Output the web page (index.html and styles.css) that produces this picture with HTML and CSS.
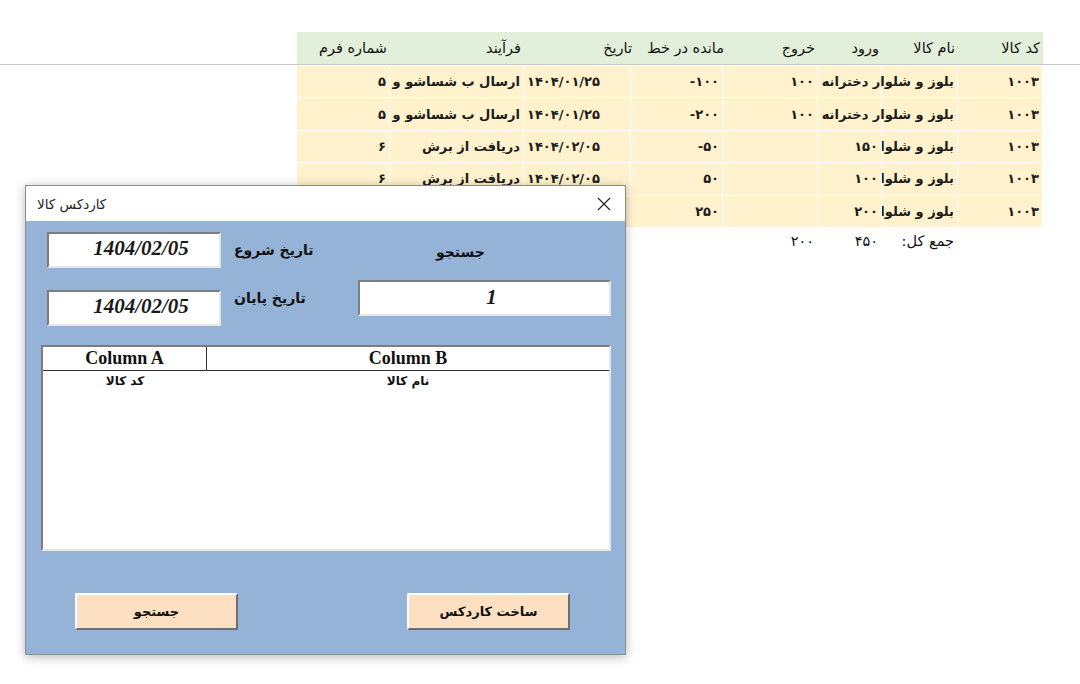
FILE: index.html
```html
<!DOCTYPE html>
<html lang="fa">
<head>
  <meta charset="UTF-8">
  <title>کاردکس کالا</title>
  <link rel="stylesheet" href="styles.css">
</head>

<body>
  <div class="sheet">
    <div class="frozen-pane">
      <table class="grid">
        <colgroup>
          <col class="c-code"><col class="c-name"><col class="c-in"><col class="c-out">
          <col class="c-bal"><col class="c-date"><col class="c-proc"><col class="c-form">
        </colgroup>
        <tr class="head-row">
          <th>کد کالا</th>
          <th>نام کالا</th>
          <th>ورود</th>
          <th>خروج</th>
          <th class="nudge">مانده در خط</th>
          <th class="nudge">تاریخ</th>
          <th>فرآیند</th>
          <th>شماره فرم</th>
        </tr>
      </table>
    </div>
    <table class="grid data">
      <colgroup>
        <col class="c-code"><col class="c-name"><col class="c-in"><col class="c-out">
        <col class="c-bal"><col class="c-date"><col class="c-proc"><col class="c-form">
      </colgroup>
      <tr>
        <td>۱۰۰۳</td><td class="spill">بلوز و شلوار دخترانه</td><td></td><td>۱۰۰</td>
        <td class="num">-۱۰۰</td><td class="date">۱۴۰۴/۰۱/۲۵</td><td>ارسال ب شساشو و</td><td>۵</td>
      </tr>
      <tr>
        <td>۱۰۰۳</td><td class="spill">بلوز و شلوار دخترانه</td><td></td><td>۱۰۰</td>
        <td class="num">-۲۰۰</td><td class="date">۱۴۰۴/۰۱/۲۵</td><td>ارسال ب شساشو و</td><td>۵</td>
      </tr>
      <tr>
        <td>۱۰۰۳</td><td>بلوز و شلوار دخترانه</td><td>۱۵۰</td><td></td>
        <td class="num">-۵۰</td><td class="date">۱۴۰۴/۰۲/۰۵</td><td>دریافت از برش</td><td>۶</td>
      </tr>
      <tr>
        <td>۱۰۰۳</td><td>بلوز و شلوار دخترانه</td><td>۱۰۰</td><td></td>
        <td class="num">۵۰</td><td class="date">۱۴۰۴/۰۲/۰۵</td><td>دریافت از برش</td><td>۶</td>
      </tr>
      <tr>
        <td>۱۰۰۳</td><td>بلوز و شلوار دخترانه</td><td>۲۰۰</td><td></td>
        <td class="num">۲۵۰</td><td class="date">۱۴۰۴/۰۲/۰۵</td><td>دریافت از برش</td><td>۶</td>
      </tr>
      <tr class="total-row">
        <td></td><td>جمع کل:</td><td>۴۵۰</td><td>۲۰۰</td>
        <td></td><td></td><td></td><td></td>
      </tr>
    </table>
  </div>

  <div class="userform">
    <div class="titlebar">
      <span class="title">کاردکس کالا</span>
      <svg class="close" width="14" height="14" viewBox="0 0 14 14">
        <path d="M1 1L13 13M13 1L1 13" stroke="#222" stroke-width="1.1" fill="none"/>
      </svg>
    </div>
    <div class="form-body">
      <div class="top-area">
        <div class="dates">
          <div class="field-row">
            <div class="textbox date-box">1404/02/05</div>
            <div class="label">تاریخ شروع</div>
          </div>
          <div class="field-row end-row">
            <div class="textbox date-box">1404/02/05</div>
            <div class="label">تاریخ پایان</div>
          </div>
        </div>
        <div class="search">
          <div class="label search-label">جستجو</div>
          <div class="textbox search-box">1</div>
        </div>
      </div>

      <div class="listbox">
        <div class="lb-head">
          <div class="lb-col col-a">Column A</div>
          <div class="lb-col col-b">Column B</div>
        </div>
        <div class="lb-row">
          <div class="lb-col col-a">کد کالا</div>
          <div class="lb-col col-b">نام کالا</div>
        </div>
      </div>

      <div class="buttons">
        <button class="cmd">جستجو</button>
        <button class="cmd">ساخت کاردکس</button>
      </div>
    </div>
  </div>
</body>
</html>
```

FILE: styles.css
```css
html, body {
  margin: 0;
  background: #fff;
  font-family: "DejaVu Sans", sans-serif;
}
*,
*::before,
*::after {
  box-sizing: border-box;
}

/* sheet: frozen header + rows */
.sheet {
  direction: rtl;
  width: 1080px;
}
.frozen-pane {
  padding-top: 32px;
  border-bottom: 1px solid #c9c9c9;
}
.grid {
  margin-right: 37px;
  width: 746px;
  table-layout: fixed;
  border-collapse: collapse;
  border-spacing: 0;
}
.c-code { width: 85px; }
.c-name { width: 76px; }
.c-in   { width: 64px; }
.c-out  { width: 95px; }
.c-bal  { width: 92px; }
.c-date { width: 107px; }
.c-proc { width: 134px; }
.c-form { width: 93px; }

.head-row th {
  height: 32px;
  padding: 0 3px;
  font-size: 14.5px;
  font-weight: normal;
  color: #111;
  text-align: right;
  white-space: nowrap;
  overflow: visible;
  background: #e2efda;
}
.head-row th.nudge {
  text-indent: -4px;
}

.data td {
  height: 32.4px;
  padding: 0 3px;
  font-size: 13px;
  font-weight: bold;
  color: #1b1b1b;
  text-align: right;
  white-space: nowrap;
  overflow: hidden;
  background: #fff2cc;
  border: 1px solid #fff;
}
.data td.spill {
  overflow: visible;
}
.data td.num {
  direction: ltr;
  text-align: right;
}
.data td.date {
  text-align: left;
}
.data .total-row td {
  background: none;
  border-color: transparent;
  font-size: 14.5px;
  font-weight: normal;
  color: #111;
  vertical-align: top;
  padding-top: 5px;
}

/* userform window */
.userform {
  position: absolute;
  top: 185px;
  left: 25px;
  width: 601px;
  height: 470px;
  border: 1px solid #8c8c8c;
  background: #95b3d7;
  box-shadow: 0 2px 10px rgba(0,0,0,.28);
  display: flex;
  flex-direction: column;
}
.titlebar {
  height: 35px;
  flex: none;
  display: flex;
  align-items: center;
  justify-content: space-between;
  padding: 0 14px 0 11px;
  background: #fff;
}
.title {
  font-size: 13.5px;
  color: #222;
}
.close {
  display: block;
}

.form-body {
  flex: 1;
  padding: 0 14px 0 15px;
}
.top-area {
  display: flex;
  justify-content: space-between;
  padding: 11px 0 0 6px;
  height: 105px;
}
.dates {
  display: flex;
  flex-direction: column;
  gap: 22px;
}
.field-row {
  display: flex;
  align-items: center;
  gap: 13px;
}
.field-row.end-row {
  align-items: flex-start;
}
.label {
  font-size: 14px;
  font-weight: bold;
  color: #111;
}
.textbox {
  background: #fff;
  border-style: solid;
  border-width: 2px;
  border-color: #7d7d7d #e6e6e6 #e6e6e6 #7d7d7d;
  font-family: "Liberation Serif", serif;
  font-weight: bold;
  font-style: italic;
  color: #1a1a1a;
  text-align: center;
}
.date-box {
  width: 174px;
  height: 36px;
  padding-left: 14px;
  font-size: 21px;
  line-height: 29px;
}
.search {
  width: 253px;
  display: flex;
  flex-direction: column;
  padding-top: 12px;
}
.search-label {
  margin-left: 78px;
}
.search-box {
  width: 253px;
  height: 36px;
  margin-top: 20px;
  padding-left: 14px;
  font-size: 21px;
  line-height: 30px;
}

.listbox {
  margin-top: 19px;
  height: 206px;
  background: #fff;
  border-style: solid;
  border-width: 2px;
  border-color: #7d7d7d #e6e6e6 #e6e6e6 #7d7d7d;
}
.lb-head,
.lb-row {
  display: flex;
}
.lb-head {
  height: 24px;
  border-bottom: 1px solid #333;
}
.lb-head .lb-col {
  font-family: "Liberation Serif", serif;
  font-size: 18px;
  font-weight: bold;
  line-height: 23px;
}
.lb-col {
  text-align: center;
  color: #111;
}
.lb-col.col-a {
  width: 164px;
}
.lb-head .col-a {
  border-right: 1px solid #333;
}
.lb-col.col-b {
  flex: 1;
}
.lb-row .lb-col {
  font-size: 12px;
  font-weight: bold;
  line-height: 20px;
}

.buttons {
  display: flex;
  gap: 169px;
  margin-top: 42px;
  padding-left: 34px;
}
.cmd {
  width: 163px;
  height: 37px;
  font-family: "DejaVu Sans", sans-serif;
  font-size: 13px;
  font-weight: bold;
  color: #111;
  background: #fde0c1;
  border-style: solid;
  border-width: 2px;
  border-color: #fff #6e6e6e #6e6e6e #fff;
  padding: 0;
}
```
